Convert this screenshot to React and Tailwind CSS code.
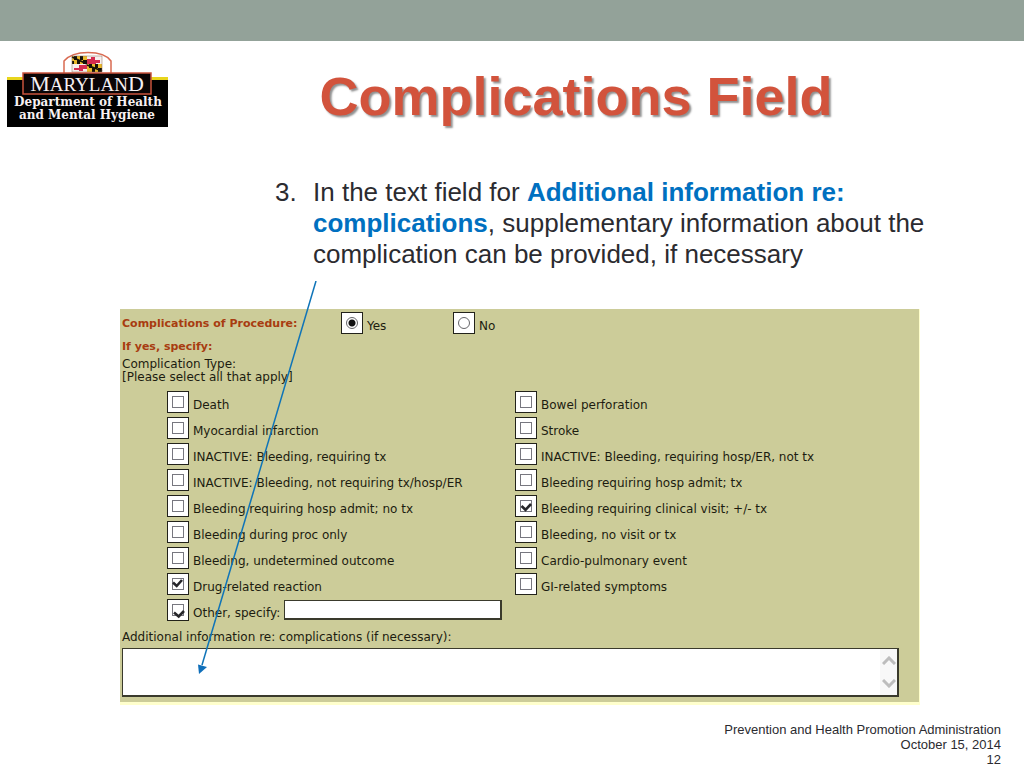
import React from 'react';

// --- FORM DATA ---
const LEFT_OPTIONS = [
  { id: 'death', label: 'Death' },
  { id: 'mi', label: 'Myocardial infarction' },
  { id: 'inactive-tx', label: 'INACTIVE: Bleeding, requiring tx' },
  { id: 'inactive-not', label: 'INACTIVE: Bleeding, not requiring tx/hosp/ER' },
  { id: 'hosp-no-tx', label: 'Bleeding requiring hosp admit; no tx' },
  { id: 'during-proc', label: 'Bleeding during proc only' },
  { id: 'undetermined', label: 'Bleeding, undetermined outcome' },
  { id: 'drug', label: 'Drug-related reaction', mark: 'high' },
];

const RIGHT_OPTIONS = [
  { id: 'bowel', label: 'Bowel perforation' },
  { id: 'stroke', label: 'Stroke' },
  { id: 'inactive-hosp', label: 'INACTIVE: Bleeding, requiring hosp/ER, not tx' },
  { id: 'hosp-tx', label: 'Bleeding requiring hosp admit; tx' },
  { id: 'clinical', label: 'Bleeding requiring clinical visit; +/- tx', mark: 'middle' },
  { id: 'no-visit', label: 'Bleeding, no visit or tx' },
  { id: 'cardio', label: 'Cardio-pulmonary event' },
  { id: 'gi', label: 'GI-related symptoms' },
];

// Check marks are drawn by hand, so each sits a little differently in its box
const MARKS = {
  high: 'M6 9.500l3.700 3.500L15 7',
  middle: 'M6.500 11l4 3.800L16 9',
  low: 'M7 13.500l4.700 4L17 12',
};

// Department logo
const Logo = () => (
  <svg width="161" height="77" viewBox="0 0 161 77" className="shrink-0" role="img" aria-label="Maryland Department of Health and Mental Hygiene">
    <rect x="0" y="28" width="161" height="49" fill="#000" />
    <rect x="0" y="27" width="161" height="3" fill="#e8d51c" />
    <path d="M57 28V11C63 4 71 2.500 81 2.500s18 1.500 23 8.500v17z" fill="#fff" stroke="#d96b52" strokeWidth="1.500" />
    <g>
      <rect x="65" y="6" width="30" height="16" fill="#f7f0ee" />
      <path d="M65 6h15v8H65zM80 14h15v8H80z" fill="#e9b92c" />
      <path d="M67 6h3v4h-3zM73 6h3v4h-3zM70 10h3v4h-3zM76 10h4v4h-4zM65 11h2v3h-2zM82 14h3v4h-3zM88 14h3v4h-3zM85 18h3v4h-3zM91 18h4v4h-4z" fill="#161208" />
      <path d="M65 7l15 7M80 15l15 6" stroke="#161208" strokeWidth="1.500" />
      <path d="M80 9h4V7h4v3h5v3h-4v1h-9zM67 18h5v-3h8v4h-4v2h-4v-1h-5z" fill="#d52c50" />
      <path d="M65 6h30v16H65z" fill="none" stroke="#8a6a55" strokeWidth="0.500" />
    </g>
    <rect x="16" y="23" width="128" height="21" fill="#0a0506" stroke="#c9533c" strokeWidth="1.500" />
    <g fill="#f6f0f2" textAnchor="middle">
      <text x="80" y="41" fontSize="22" fontFamily="'Liberation Serif', serif">
        M<tspan fontSize="19">ARYLAN</tspan>D
      </text>
      <g fontFamily="'DejaVu Serif', serif" fontWeight="bold" fontSize="12">
        <text x="81" y="56">Department of Health</text>
        <text x="80" y="69">and Mental Hygiene</text>
      </g>
    </g>
  </svg>
);

const CheckOption = ({ id, label, mark }) => (
  <div className="flex h-[22px] items-end gap-1">
    <span className="relative flex h-[22px] w-[22px] shrink-0 items-start justify-center border border-[#22221a] bg-white pt-1">
      <input
        id={id}
        type="checkbox"
        defaultChecked={Boolean(mark)}
        className="h-3 w-3 appearance-none border border-[#77777f] bg-white"
      />
      {mark && (
        <svg viewBox="0 0 22 22" className="pointer-events-none absolute -top-px -left-px h-[22px] w-[22px]">
          <path d={MARKS[mark]} fill="none" stroke="#26262a" strokeWidth="2.600" />
        </svg>
      )}
    </span>
    <label htmlFor={id} className="whitespace-nowrap leading-4">{label}</label>
  </div>
);

const RadioOption = ({ id, label, checked }) => (
  <div className="flex h-[22px] items-end gap-1">
    <span className="flex h-[22px] w-[22px] shrink-0 items-center justify-center border border-[#22221a] bg-white">
      <input
        id={id}
        type="radio"
        name="complications"
        defaultChecked={checked}
        className="h-3 w-3 appearance-none rounded-full border border-[#66666a] bg-white checked:bg-[radial-gradient(circle,#111_3px,#fff_4px)]"
      />
    </span>
    <label htmlFor={id} className="leading-4">{label}</label>
  </div>
);

// Arrow from the instruction text down to the additional information box
const Arrow = () => (
  <svg viewBox="0 0 124 396" className="pointer-events-none absolute -top-7 left-[75px] h-[396px] w-[124px]">
    <path d="M121 0L7 384" stroke="#0f74b8" strokeWidth="1.500" />
    <path d="M4 393L3 383.500L12 386z" fill="#0f6fba" />
  </svg>
);

function App() {
  return (
    <div className="min-h-screen bg-white font-['Liberation_Sans',sans-serif] text-[#2b2b30]">
      <div className="h-[41px] bg-[#93a299]" />

      {/* Header */}
      <header className="flex items-start pt-[9px] pl-[7px]">
        <Logo />
        <h1 className="flex-1 pt-[14px] pr-10 text-center text-[54px] leading-[64px] font-bold text-[#d2533c] [text-shadow:2px_2px_2px_#00000070]">
          Complications Field
        </h1>
      </header>

      {/* Instruction */}
      <ol start="3" className="mt-[49px] pr-20 pl-[275px] text-[26px] leading-[31px]">
        <li className="flex">
          <span className="w-[38px] shrink-0">3.</span>
          <p>
            In the text field for{' '}
            <strong className="text-[#0070c0]">Additional information re: complications</strong>
            , supplementary information about the complication can be provided, if necessary
          </p>
        </li>
      </ol>

      {/* Form */}
      <main className="mt-[39px] pr-[104px] pl-[120px]">
        <form className="relative border-r border-b-3 border-[#ffffcc] bg-[#cccc99] pt-[3px] pb-[5px] pl-[2px] font-['DejaVu_Sans',sans-serif] text-xs text-[#1c1c10]">
          <div className="flex items-end">
            <span className="w-[219px] text-[11px] leading-5 font-bold text-[#a83c10]">Complications of Procedure:</span>
            <div className="w-28">
              <RadioOption id="yes" label="Yes" checked />
            </div>
            <RadioOption id="no" label="No" />
          </div>
          <h2 className="mt-[5px] text-[11px] leading-4 font-bold text-[#a83c10]">If yes, specify:</h2>
          <p className="mt-[3px] leading-[13px]">
            Complication Type:
            <br />
            [Please select all that apply]
          </p>

          <div className="mt-[7px] grid grid-cols-2 pr-14 pl-[45px]">
            <div className="flex flex-col gap-1">
              {LEFT_OPTIONS.map((option) => (
                <CheckOption key={option.id} {...option} />
              ))}
              <div className="flex items-center gap-1">
                <CheckOption id="other" label="Other, specify:" mark="low" />
                <input aria-label="Other complication" type="text" className="h-5 w-[218px] border border-r-2 border-b-2 border-[#3a3a2c] bg-white px-1" />
              </div>
            </div>
            <div className="flex flex-col gap-1">
              {RIGHT_OPTIONS.map((option) => (
                <CheckOption key={option.id} {...option} />
              ))}
            </div>
          </div>

          <label htmlFor="additional" className="mt-2 block leading-4">
            Additional information re: complications (if necessary):
          </label>
          <div className="mt-[3px] mr-5 flex border border-r-2 border-b-2 border-[#3a3a2c] bg-white">
            <textarea id="additional" className="h-[46px] flex-1 resize-none px-1" />
            <div className="flex w-[17px] flex-col items-center justify-between bg-[#f8f8f8] py-[7px]">
              <svg width="14" height="9" viewBox="0 0 14 9" fill="none" stroke="#bdbdbd" strokeWidth="3">
                <path d="M1 8l6-6 6 6" />
              </svg>
              <svg width="14" height="9" viewBox="0 0 14 9" fill="none" stroke="#bdbdbd" strokeWidth="3">
                <path d="M1 1l6 6 6-6" />
              </svg>
            </div>
          </div>
          <Arrow />
        </form>
      </main>

      {/* Footer */}
      <footer className="pt-[17px] pr-[23px] text-right text-[13px] leading-[15px]">
        <p>Prevention and Health Promotion Administration</p>
        <p>October 15, 2014</p>
        <p>12</p>
      </footer>
    </div>
  );
}

export default App;
